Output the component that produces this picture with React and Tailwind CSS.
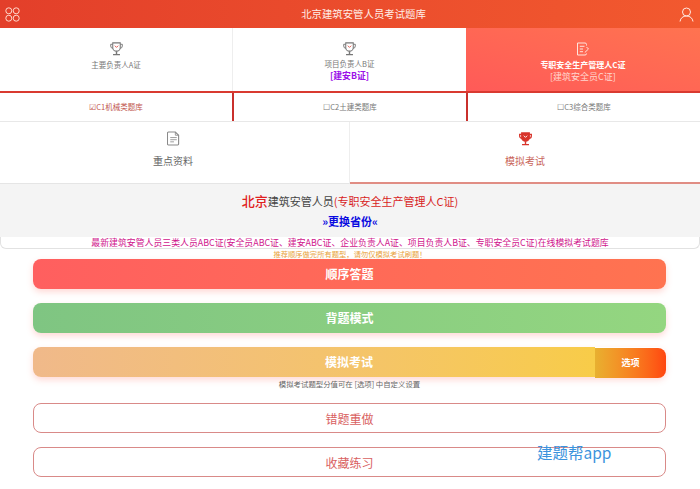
import React from "react";

const Trophy = ({ c = "#777", h = "#e0534a", fill = false }) => (
  <svg width="15" height="15" viewBox="0 0 16 16" fill="none">
    <path d="M4 2h8v4.800a4 4 0 0 1-8 0z" fill={fill ? c : "none"} stroke={c} strokeWidth={fill ? 1.4 : 1.1} />
    <path d="M4 3.500H1.800v1.800a2.500 2.500 0 0 0 2.500 2.500M12 3.500h2.200v1.800a2.500 2.500 0 0 1-2.500 2.500" stroke={c} strokeWidth={fill ? 1.4 : 1} />
    <path d="M8 10.800v3M4.300 14.500h7.400" stroke={c} strokeWidth="1.500" />
    <path d="M6.200 5 8 6.800 9.800 5" stroke={fill ? "#fff" : h} strokeWidth="1" />
  </svg>
);

const Doc = ({ c = "#8a8a8a" }) => (
  <svg width="13" height="15" viewBox="0 0 14 16" fill="none">
    <path d="M1.500 1h7.500l3.500 3.500V14a1 1 0 0 1-1 1h-10a1 1 0 0 1-1-1V2a1 1 0 0 1 1-1z" stroke={c} strokeWidth="1.200" />
    <path d="M9 1v3.500h3.500" stroke={c} strokeWidth="0.900" />
    <path d="M3.500 7h7M3.500 9.300h7M3.500 11.600h4" stroke={c} strokeWidth="0.900" />
  </svg>
);

const Edit = () => (
  <svg width="14" height="14" viewBox="0 0 14 14" fill="none" stroke="#ffe4dc" strokeWidth="1">
    <path d="M10.500 3.500V2.500A1.500 1.500 0 0 0 9 1H1.500v12H9a1.500 1.500 0 0 0 1.500-1.500" />
    <path d="M3.800 4.300h4.700M3.800 7h3.200M3.800 9.700h3.200M8.800 10.500 12.500 7 10.500 5" />
  </svg>
);

const font = { fontFamily: '"Noto Sans CJK SC", sans-serif' };
const solid = "h-[30px] rounded-[8px] text-white text-[12px] font-bold shadow-[0_3px_6px_rgba(255,130,120,.3)]";
const outline = "h-[30px] rounded-[8px] border border-[#d98a88] bg-white text-[#d9615f] text-[12px] pt-[1px]";

export default function App() {
  return (
    <div className="w-[700px] h-[489px] overflow-hidden bg-white relative" style={font}>
      <header className="h-[28px] bg-gradient-to-r from-[#e33f2a] to-[#f2592f] flex items-center justify-between pl-[5px] pr-[6px]">
        <svg width="15" height="15" viewBox="0 0 15 15" fill="none" stroke="#ffd8cc" strokeWidth="1">
          <circle cx="3.800" cy="3.800" r="3" /><circle cx="11.200" cy="3.800" r="3" />
          <circle cx="3.800" cy="11.200" r="3" /><circle cx="11.200" cy="11.200" r="3" />
        </svg>
        <span className="text-[10.4px] ml-[28px] text-[#ffeee8]">北京建筑安管人员考试题库</span>
        <svg width="15" height="15" viewBox="0 0 15 15" fill="none" stroke="#ffe9e2" strokeWidth="1">
          <circle cx="7.500" cy="5" r="4" /><path d="M1 14.500c.5-3.500 3-5.500 6.500-5.500s6 2 6.500 5.500" />
        </svg>
      </header>

      <div className="grid grid-cols-[233px_233px_234px] h-[63px]">
        <div className="flex flex-col items-center pt-[13px] border-r border-[#eee]">
          <Trophy />
          <span className="text-[7.500px] leading-[12px] mt-[3px] text-[#777]">主要负责人A证</span>
        </div>
        <div className="flex flex-col items-center pt-[13px]">
          <Trophy />
          <span className="text-[7.500px] leading-[12px] mt-[2px] text-[#777]">项目负责人B证</span>
          <span className="text-[8.800px] leading-[11px] font-bold text-[#9b11e8]">[建安B证]</span>
        </div>
        <div className="flex flex-col items-center pt-[14px] bg-gradient-to-tr from-[#ff5a58] to-[#ff7350]">
          <Edit />
          <span className="text-[8px] leading-[12px] mt-[3px] font-bold text-white">专职安全生产管理人C证</span>
          <span className="text-[9px] leading-[11px] text-[#ffd6cf]">[建筑安全员C证]</span>
        </div>
      </div>

      <div className="grid grid-cols-[232px_234px_234px] h-[30px] border-t-2 border-[#d93a30] bg-white">
        <div className="flex items-center justify-center text-[7.500px] text-[#c0524a]">☑C1机械类题库</div>
        <div className="flex items-center justify-center text-[7.500px] text-[#777] border-l-2 border-[#c9302c]">☐C2土建类题库</div>
        <div className="flex items-center justify-center text-[7.500px] text-[#777] border-l-2 border-[#c9302c]">☐C3综合类题库</div>
      </div>

      <div className="grid grid-cols-2 h-[63px] border-t border-[#e8e8e8]">
        <div className="flex flex-col items-center pt-[9px] pr-[3px] border-b border-[#e5e5e5] border-r border-r-[#eee]">
          <Doc />
          <span className="text-[10px] leading-[15px] mt-[7px] text-[#666]">重点资料</span>
        </div>
        <div className="flex flex-col items-center pt-[9px] border-b-2 border-[#e08d84]">
          <Trophy c="#d8352c" fill />
          <span className="text-[10px] leading-[15px] mt-[7px] text-[#c9655a]">模拟考试</span>
        </div>
      </div>

      <div className="h-[53px] bg-[#f4f4f4] flex flex-col items-center">
        <div className="mt-[7px] text-[11px] leading-[20px] text-[#444] whitespace-nowrap">
          <span className="text-[13px] font-medium text-[#e02020]">北京</span>建筑安管人员<span className="text-[#d81e1e]">(专职安全生产管理人C证)</span>
        </div>
        <div className="mt-[2px] text-[11px] leading-[16px] font-bold text-[#0a0ae0]">»更换省份«</div>
      </div>
      <div className="h-[12px] border border-t-0 border-[#e2e2e2] rounded-b-[6px] text-center text-[8.900px] leading-[12px] text-[#d0158c] whitespace-nowrap">
        最新建筑安管人员三类人员ABC证(安全员ABC证、建安ABC证、企业负责人A证、项目负责人B证、专职安全员C证)在线模拟考试题库
      </div>

      <div className="h-[10px] text-center text-[7.300px] leading-[11px] text-[#e8a33c] whitespace-nowrap">
        推荐顺序做完所有题型，请勿仅模拟考试刷题！
      </div>

      <main className="pl-[33px] pr-[34px] flex flex-col">
        <button className={`${solid} bg-gradient-to-r from-[#ff5f5f] to-[#ff7350]`}>顺序答题</button>
        <button className={`${solid} mt-[14px] bg-gradient-to-r from-[#7fc582] to-[#94d680]`}>背题模式</button>
        <div className="mt-[14px] h-[30px] flex rounded-[8px] shadow-[0_3px_6px_rgba(255,130,120,.3)]">
          <button className="w-[562px] pl-[70px] rounded-l-[8px] bg-gradient-to-r from-[#f0b98a] to-[#f8cc48] text-white text-[12px] font-bold">模拟考试</button>
          <button className="flex-1 mt-[1px] h-[30px] rounded-r-[8px] bg-gradient-to-r from-[#e8b030] to-[#ff4510] text-white text-[9px] font-bold">选项</button>
        </div>
        <div className="text-center text-[7.400px] leading-[11px] text-[#666] mt-[1px]">模拟考试题型分值可在 [选项] 中自定义设置</div>
        <button className={`${outline} mt-[14px]`}>错题重做</button>
        <button className={`${outline} mt-[14px]`}>收藏练习</button>
      </main>

      <div className="absolute left-[537px] top-[441px] text-[15.500px] leading-[22px] text-[#3b93dd]">建题帮app</div>
    </div>
  );
}
